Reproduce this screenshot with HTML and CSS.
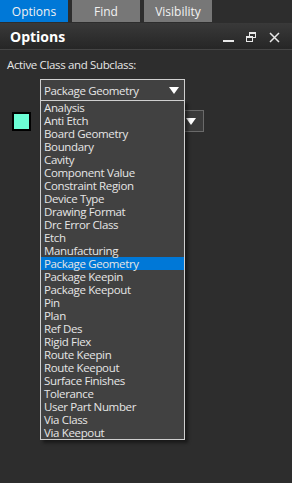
FILE: index.html
```html
<!DOCTYPE html>
<html lang="en">

<head>
    <meta charset="UTF-8">
    <meta name="viewport" content="width=device-width, initial-scale=1.0">
    <title>Options</title>
    <link rel="stylesheet" href="styles.css">
</head>

<body>
    <div class="tabs">
        <div class="tab active">Options</div>
        <div class="tab">Find</div>
        <div class="tab">Visibility</div>
    </div>
    <div class="titlebar">
        <div class="title">Options</div>
        <div class="winbtns">
            <svg width="11" height="11" viewBox="0 0 11 11">
                <rect x="0" y="8" width="11" height="2" fill="#e8e8e8" />
            </svg>
            <svg width="11" height="11" viewBox="0 0 11 11">
                <rect x="3.5" y="0.5" width="6" height="5" fill="none" stroke="#e8e8e8" />
                <rect x="3.5" y="0.5" width="6" height="1.5" fill="#e8e8e8" />
                <rect x="0.5" y="4.5" width="6" height="5" fill="#2e2e2e" stroke="#e8e8e8" />
                <rect x="0.5" y="4.5" width="6" height="1.5" fill="#e8e8e8" />
            </svg>
            <svg width="11" height="11" viewBox="0 0 11 11">
                <path d="M1 1 L10 10 M10 1 L1 10" stroke="#e8e8e8" stroke-width="1.5" />
            </svg>
        </div>
    </div>
    <div class="content">
        <div class="label">Active Class and Subclass:</div>
        <div class="dropdown">
            <div class="combo">
                <span>Package Geometry</span>
                <span class="arrow"></span>
            </div>
            <ul class="list">
                <li>Analysis</li>
                <li>Anti Etch</li>
                <li>Board Geometry</li>
                <li>Boundary</li>
                <li>Cavity</li>
                <li>Component Value</li>
                <li>Constraint Region</li>
                <li>Device Type</li>
                <li>Drawing Format</li>
                <li>Drc Error Class</li>
                <li>Etch</li>
                <li>Manufacturing</li>
                <li class="sel">Package Geometry</li>
                <li>Package Keepin</li>
                <li>Package Keepout</li>
                <li>Pin</li>
                <li>Plan</li>
                <li>Ref Des</li>
                <li>Rigid Flex</li>
                <li>Route Keepin</li>
                <li>Route Keepout</li>
                <li>Surface Finishes</li>
                <li>Tolerance</li>
                <li>User Part Number</li>
                <li>Via Class</li>
                <li>Via Keepout</li>
            </ul>
        </div>
        <div class="subrow">
            <div class="swatch"></div>
            <div class="combo2">
                <span class="arrow"></span>
            </div>
        </div>
    </div>
</body>

</html>
```

FILE: styles.css
```css
* {
    margin: 0;
    padding: 0;
    box-sizing: border-box;
}

body {
    background-color: #2d2d2d;
    font-family: "Open Sans", "Noto Sans", sans-serif;
    color: #e6e6e6;
    width: 292px;
    height: 483px;
    overflow: hidden;
}

.tabs {
    display: flex;
    gap: 4px;
    height: 23px;
}

.tab {
    width: 68px;
    height: 22px;
    background-color: #777777;
    color: #f2f2f2;
    font-size: 12px;
    display: flex;
    justify-content: center;
    align-items: center;
}

.tab.active {
    background-color: #0078d7;
}

.titlebar {
    display: flex;
    justify-content: space-between;
    align-items: center;
    height: 27px;
    padding: 0 12px 0 10px;
    background: linear-gradient(#393939, #262626);
    border-bottom: 1px solid #454545;
}

.title {
    font-size: 14px;
    font-weight: bold;
    color: #ffffff;
}

.winbtns {
    display: flex;
    gap: 12px;
    align-items: center;
    padding-top: 2px;
}

.content {
    padding: 7px 7px;
}

.label {
    font-size: 11.5px;
    line-height: 15px;
    letter-spacing: -0.35px;
}

.dropdown {
    position: relative;
    margin: 7px 0 0 33px;
    width: 145px;
}

.combo {
    display: flex;
    justify-content: space-between;
    align-items: center;
    height: 22px;
    padding: 0 5px 0 3px;
    background-color: #414141;
    border: 1px solid #cfcfcf;
    font-size: 11.5px;
    letter-spacing: -0.35px;
}

.arrow {
    width: 0;
    height: 0;
    border-left: 5px solid transparent;
    border-right: 5px solid transparent;
    border-top: 7px solid #ffffff;
}

.list {
    position: absolute;
    top: 21px;
    left: 0;
    width: 145px;
    list-style: none;
    background-color: #414141;
    border: 1px solid #cfcfcf;
    box-shadow: 3px 3px 3px rgba(0, 0, 0, 0.45);
    z-index: 2;
}

.list li {
    height: 13px;
    line-height: 13px;
    font-size: 11.5px;
    letter-spacing: -0.35px;
    padding-left: 3px;
    white-space: nowrap;
}

.list li.sel {
    background-color: #0078d7;
}

.subrow {
    display: flex;
    align-items: center;
    margin-top: 9px;
    height: 22px;
}

.swatch {
    width: 19px;
    height: 19px;
    margin-left: 5px;
    background-color: #6cffd6;
    border: 2px solid #000000;
}

.combo2 {
    display: flex;
    justify-content: flex-end;
    align-items: center;
    margin-left: 30px;
    width: 143px;
    height: 22px;
    padding-right: 7px;
    background-color: #3b3b3b;
    border: 1px solid #6a6a6a;
}
```
